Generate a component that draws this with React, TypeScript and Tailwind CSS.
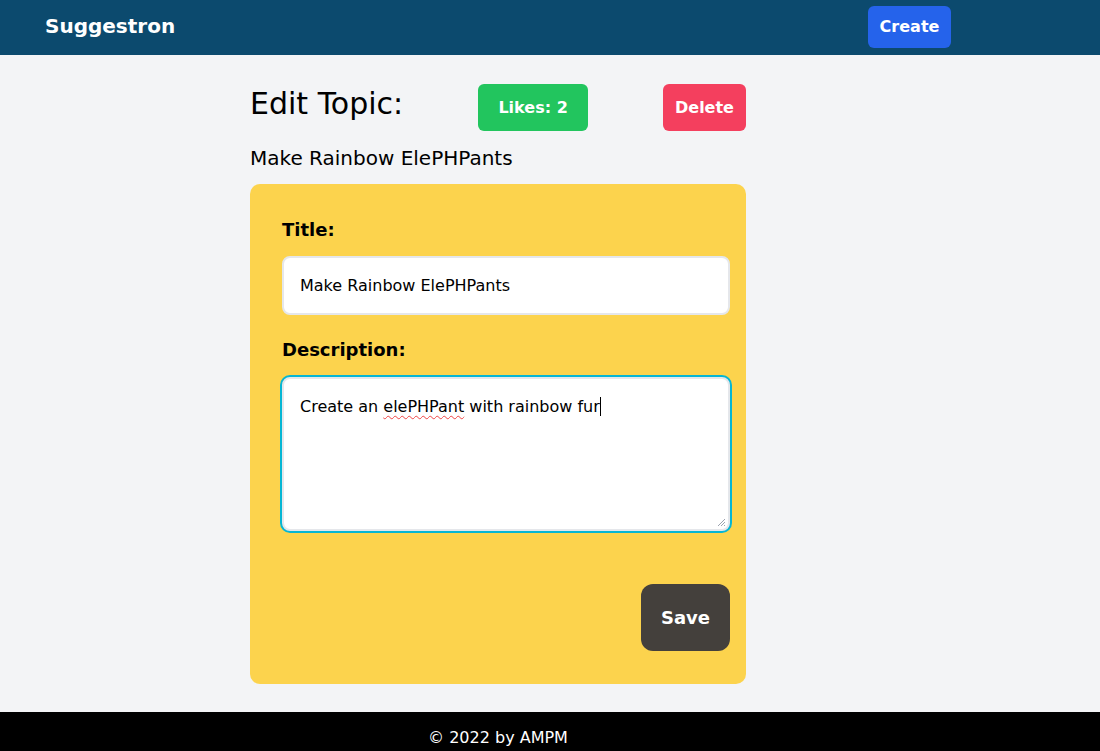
import React from "react";

export default function App() {
  const font = { fontFamily: '"DejaVu Sans", sans-serif' };
  return (
    <div className="min-h-screen bg-[#f3f4f6] text-black" style={font}>
      <header className="h-[55px] bg-[#0c4a6e] flex items-center justify-between pl-[45px] pr-[149px] pb-[3px]">
        <div className="text-white font-bold text-xl leading-7">Suggestron</div>
        <button className="bg-[#2563eb] text-white font-bold text-base leading-6 rounded-md w-[83px] h-[42px] mt-[1px]">
          Create
        </button>
      </header>

      <main className="ml-[250px] w-[496px] pt-[29px] pb-[28px]">
        <div className="flex justify-between items-start">
          <h1 className="text-3xl leading-9 mt-[2px]">Edit Topic:</h1>
          <button className="bg-[#22c55e] text-white font-bold text-base rounded-md px-5 h-[47px] w-[110px]">
            Likes: 2
          </button>
          <button className="bg-[#f43f5e] text-white font-bold text-base rounded-md h-[47px] w-[83px]">
            Delete
          </button>
        </div>
        <p className="text-xl leading-7 mt-[13px]">Make Rainbow ElePHPants</p>

        <div className="mt-3 bg-[#fcd34d] rounded-[10px] pl-8 pr-4 pt-8 pb-[33px]">
          <label className="block font-bold text-lg leading-7">Title:</label>
          <div className="mt-3 h-[59px] bg-white border-2 border-[#e5e7eb] rounded-lg px-4 flex items-center text-base">
            Make Rainbow ElePHPants
          </div>
          <label className="block font-bold text-lg leading-7 mt-[21px]">Description:</label>
          <div className="relative mt-[13px] h-[154px] bg-white border-2 border-[#e5e7eb] rounded-lg px-4 py-4 text-base leading-6 ring-2 ring-[#06b6d4]">
            <span>Create an </span>
            <span className="underline decoration-wavy decoration-[#ef4444] decoration-1 underline-offset-[3px]">elePHPant</span>
            <span> with rainbow fur</span>
            <span className="inline-block w-px h-[19px] bg-black align-[-4px]"></span>
            <svg className="absolute right-[2px] bottom-[2px]" width="10" height="10" viewBox="0 0 10 10">
              <path d="M9 2 L2 9 M9 5 L5 9 M9 8 L8 9" stroke="#9ca3af" strokeWidth="1" />
            </svg>
          </div>
          <div className="flex justify-end mt-[53px]">
            <button className="bg-[#44403c] text-white font-bold text-lg rounded-xl w-[89px] h-[67px]">
              Save
            </button>
          </div>
        </div>
      </main>

      <footer className="bg-black text-white h-[50px] pt-[14px]">
        <div className="ml-[250px] w-[496px] text-center text-base leading-6">© 2022 by AMPM</div>
      </footer>
    </div>
  );
}
